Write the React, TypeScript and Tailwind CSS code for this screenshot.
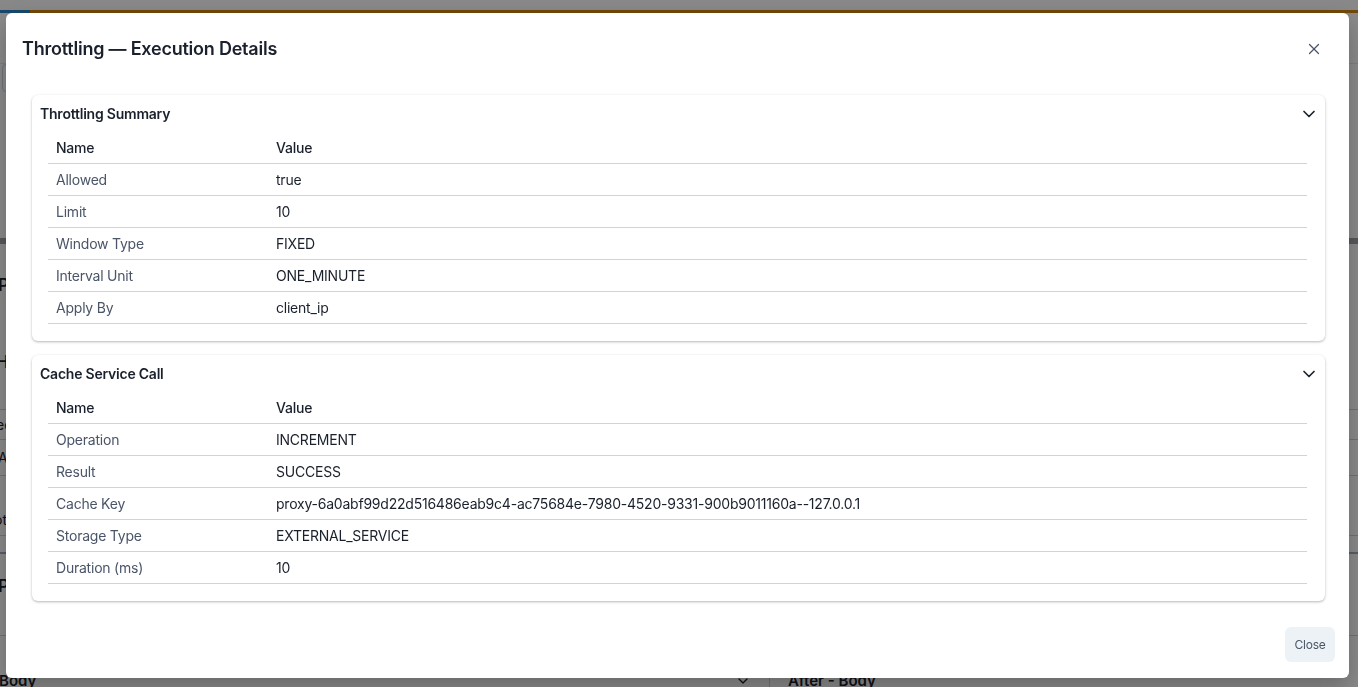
import { ChevronDown, X } from "lucide-react";

type Row = { name: string; value: string };

const summaryRows: Row[] = [
  { name: "Allowed", value: "true" },
  { name: "Limit", value: "10" },
  { name: "Window Type", value: "FIXED" },
  { name: "Interval Unit", value: "ONE_MINUTE" },
  { name: "Apply By", value: "client_ip" },
];

const cacheRows: Row[] = [
  { name: "Operation", value: "INCREMENT" },
  { name: "Result", value: "SUCCESS" },
  { name: "Cache Key", value: "proxy-6a0abf99d22d516486eab9c4-ac75684e-7980-4520-9331-900b9011160a--127.0.0.1" },
  { name: "Storage Type", value: "EXTERNAL_SERVICE" },
  { name: "Duration (ms)", value: "10" },
];

function DetailCard({ title, rows }: { title: string; rows: Row[] }) {
  return (
    <div className="bg-white rounded-md shadow-[0_1px_3px_rgba(0,0,0,0.22),0_1px_2px_rgba(0,0,0,0.08)] pt-[9px] pb-[17px]">
      <div className="flex items-center justify-between pl-2 pr-[6px] h-5">
        <span className="text-sm leading-5 font-semibold text-[#1a202c]">{title}</span>
        <ChevronDown size={20} strokeWidth={2} className="text-[#1a202c]" />
      </div>
      <div className="mt-2 ml-4 mr-[18px] text-sm">
        <div className="flex h-8 items-center border-b border-[#cbd5e0] font-medium text-[#1a202c]">
          <div className="w-[220px] px-2">Name</div>
          <div className="px-2">Value</div>
        </div>
        {rows.map((row) => (
          <div key={row.name} className="flex h-8 items-center border-b border-[#cbd5e0]">
            <div className="w-[220px] px-2 text-[#4a5568]">{row.name}</div>
            <div className="px-2 text-[#1a202c]">{row.value}</div>
          </div>
        ))}
      </div>
    </div>
  );
}

// the page that sits dimmed behind the dialog; only slivers of it show
function BackgroundPage() {
  return (
    <div className="h-[687px] w-full bg-white overflow-hidden">
      <div className="h-[10px] bg-[#fbfcfd]" />
      <div className="flex h-[3px]">
        <div className="w-[30px] bg-[#2b87c8]" />
        <div className="flex-1 bg-[#d1860f]" />
      </div>
      <div className="h-[51px] border-b border-[#e2e8f0]" />
      <div className="h-[28px] w-[200px] border border-[#cbd5e0] rounded ml-[2px]" />
      <div className="h-[146px]" />
      <div className="h-[6px] bg-[#9ea3a8]" />
      <div className="text-sm text-[#1a202c]">
        <div className="h-[21px]" />
        <div className="h-[40px] flex items-center font-semibold text-[17px] -ml-[2px]">Policies</div>
        <div className="h-[37px]" />
        <div className="h-[40px] flex items-center font-semibold text-[17px] -ml-[4px]">Headers</div>
        <div className="h-[28px] border-b border-[#cbd5e0]" />
        <div className="h-[30px] border-b border-[#cbd5e0] -ml-[4px] flex items-center">ed</div>
        <div className="h-[36px] border-b border-[#cbd5e0] -ml-[2px] flex items-center">A</div>
        <div className="h-[28px]" />
        <div className="h-[32px] border-b border-[#cbd5e0] -ml-[6px] flex items-center">ot</div>
        <div className="h-[18px] border-b-2 border-[#a0aec0]" />
        <div className="h-[64px] font-semibold text-[17px] -ml-[2px] flex items-center">Payload</div>
        <div className="h-[18px] border-b border-[#cbd5e0]" />
        <div className="h-[26px]" />
        <div className="flex h-[38px] items-center font-semibold text-[15px]">
          <div className="w-[770px] flex items-center justify-between pr-[18px] -ml-[1px]">
            <span>Body</span>
            <ChevronDown size={16} />
          </div>
          <div className="w-px h-full bg-[#cbd5e0]" />
          <span className="ml-[18px]">After - Body</span>
        </div>
      </div>
    </div>
  );
}

export default function App() {
  return (
    <div className="relative h-[687px] w-full overflow-hidden font-['Inter','Noto_Sans',sans-serif]">
      <BackgroundPage />
      <div className="fixed inset-0 bg-black/[0.46] pl-[6px] pr-[9px] pt-[13px] pb-[9px]">
        <div className="relative flex h-full flex-col rounded-md bg-white tracking-[-0.014em] shadow-[0_10px_25px_rgba(0,0,0,0.25)]">
          <div className="pl-4 pt-[22px] pb-[32px]">
            <h2 className="text-lg leading-7 font-semibold text-[#1a202c]">Throttling — Execution Details</h2>
          </div>
          <button
            type="button"
            className="absolute top-[20px] right-[19px] flex h-8 w-8 items-center justify-center rounded-md text-[#4a5568]"
          >
            <X size={18} strokeWidth={1.6} />
          </button>
          <div className="flex flex-1 flex-col gap-[14px] pl-[26px] pr-[24px]">
            <DetailCard title="Throttling Summary" rows={summaryRows} />
            <DetailCard title="Cache Service Call" rows={cacheRows} />
          </div>
          <div className="flex justify-end pr-[14px] pb-4">
            <button
              type="button"
              className="flex h-[35px] w-[50px] items-center justify-center rounded-md bg-[#edf2f7] text-xs text-[#4a5568]"
            >
              Close
            </button>
          </div>
        </div>
      </div>
    </div>
  );
}
